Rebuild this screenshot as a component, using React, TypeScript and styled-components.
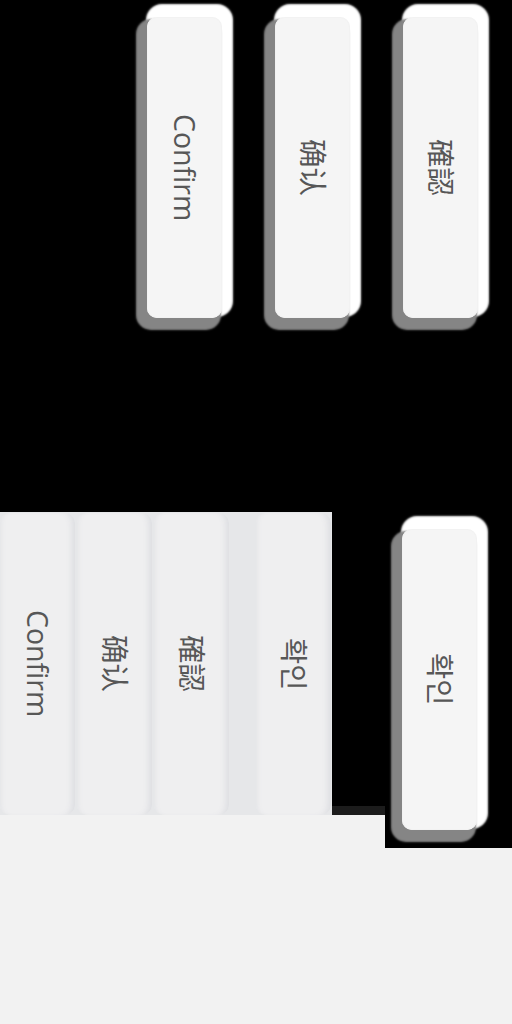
import React from "react";
import styled, { createGlobalStyle } from "styled-components";

const Global = createGlobalStyle`
  html, body { margin: 0; padding: 0; background: #000; }
  #root { width: 512px; }
`;

const Page = styled.div`
  width: 512px;
  height: 1024px;
  display: flex;
  flex-direction: column;
  background: #000;
  overflow: hidden;
`;

const TopRow = styled.div`
  height: 512px;
  display: flex;
  gap: 53px;
  padding: 17px 0 0 147px;
  box-sizing: border-box;
  align-items: flex-start;
`;

const RaisedButton = styled.button`
  width: 75px;
  height: 301px;
  flex: none;
  border: none;
  padding: 0;
  border-radius: 10px;
  background: #f5f5f5;
  box-shadow: inset 0 0 0 1px #f2f2f2, -6px 7px 2px 5px #858585, 5px -7px 2px 6px #ffffff;
  display: flex;
  align-items: center;
  justify-content: center;
  cursor: pointer;
`;

const Label = styled.span<{ $font: string }>`
  writing-mode: vertical-rl;
  text-orientation: sideways;
  font-family: "Open Sans", ${(p) => p.$font}, sans-serif;
  font-size: 28.5px;
  line-height: 1;
  color: #575757;
  white-space: nowrap;
`;

const BottomRow = styled.div`
  flex: 1;
  display: flex;
  align-items: flex-start;
  background: #f2f2f2;
`;

const GroupCell = styled.div`
  width: 385px;
  height: 303px;
  background: linear-gradient(to bottom, #000 294px, #1c1c1c 294px);
  flex: none;
`;

const Group = styled.div`
  width: 332px;
  height: 303px;
  display: flex;
  gap: 2px;
  background: #e6e7e9;
  box-sizing: border-box;
  padding-top: 1px;
`;

const GroupButton = styled.button<{ $gapBefore?: number }>`
  width: 75px;
  height: 302px;
  flex: none;
  border: none;
  padding: 0;
  margin-left: ${(p) => p.$gapBefore ?? 0}px;
  border-radius: 10px;
  background: #efeff0;
  box-shadow: inset -7px 0 6px -4px #dcdde1, inset 5px 0 5px -4px #e2e3e6;
  display: flex;
  align-items: center;
  justify-content: center;
  cursor: pointer;
`;

const SoloCell = styled.div`
  flex: 1;
  height: 336px;
  background: #000;
  padding: 17px 0 0 17px;
  box-sizing: border-box;
`;

const SC = '"Noto Sans CJK SC"';
const TC = '"Noto Sans CJK TC"';
const KR = '"Noto Sans CJK KR"';

const items = [
  { text: "Confirm", font: SC },
  { text: "确认", font: SC },
  { text: "確認", font: TC },
];

export default function App() {
  return (
    <>
      <Global />
      <Page>
        <TopRow>
          {items.map((it) => (
            <RaisedButton key={it.text}>
              <Label $font={it.font}>{it.text}</Label>
            </RaisedButton>
          ))}
        </TopRow>
        <BottomRow>
          <GroupCell>
            <Group>
              {items.map((it) => (
                <GroupButton key={it.text}>
                  <Label $font={it.font}>{it.text}</Label>
                </GroupButton>
              ))}
              <GroupButton $gapBefore={25}>
                <Label $font={KR}>확인</Label>
              </GroupButton>
            </Group>
          </GroupCell>
          <SoloCell>
            <RaisedButton>
              <Label $font={KR}>확인</Label>
            </RaisedButton>
          </SoloCell>
        </BottomRow>
      </Page>
    </>
  );
}
